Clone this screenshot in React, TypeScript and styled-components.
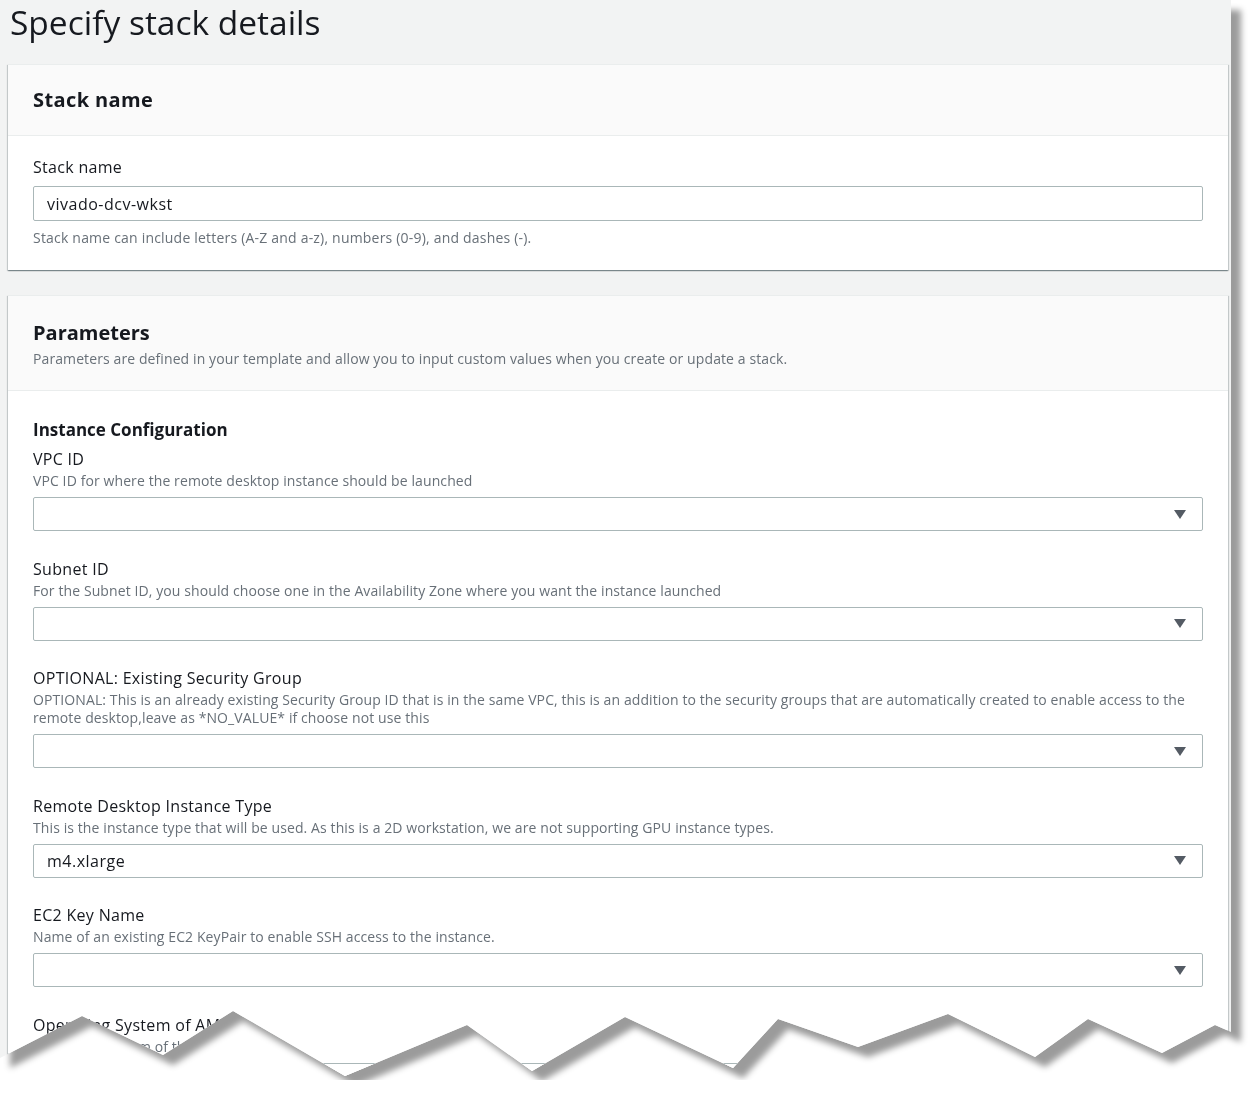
import styled, { createGlobalStyle } from "styled-components";

const GlobalStyle = createGlobalStyle`
  html, body {
    margin: 0;
    padding: 0;
    background: #ffffff;
  }
  body {
    font-family: "Open Sans", "Noto Sans", Arial, sans-serif;
    color: #16191f;
  }
  * { box-sizing: border-box; }
`;

const tornEdge = `polygon(
  0 0, 1231px 0, 1231px 1032px, 1215px 1025px, 1162px 1053px, 1088px 1019px,
  1035px 1057px, 948px 1014px, 858px 1047px, 778px 1019px, 733px 1068px,
  625px 1017px, 532px 1071px, 467px 1025px, 345px 1076px, 233px 1011px,
  163px 1055px, 82px 1016px, 0 1058px
)`;

const ShadowFrame = styled.div`
  width: 1231px;
  filter: drop-shadow(10px 10px 3px #9b9b9b);
`;

const Page = styled.div`
  height: 1080px;
  overflow: hidden;
  background: #f2f3f3;
  clip-path: ${tornEdge};
  padding: 0 3px 0 8px;
`;

const Title = styled.h1`
  margin: 0;
  padding: 1px 0 0 2px;
  height: 64px;
  font-size: 33.5px;
  line-height: 42px;
  font-weight: 400;
  color: #16191f;
`;

const Panel = styled.section`
  background: #ffffff;
  box-shadow: 0 1px 1px 0 rgba(0, 28, 36, 0.3), 1px 1px 1px 0 rgba(0, 28, 36, 0.15),
    -1px 1px 1px 0 rgba(0, 28, 36, 0.15);
  border-top: 1px solid #eaeded;
  & + & {
    margin-top: 25px;
  }
`;

const PanelHeader = styled.header<{ $tall?: boolean }>`
  background: #fafafa;
  border-bottom: 1px solid #eaeded;
  padding: ${(p) => (p.$tall ? "21px 25px 22px" : "19px 25px 19px")};
`;

const PanelTitle = styled.h2<{ $spacing?: number }>`
  margin: 0;
  font-size: 20px;
  line-height: 32px;
  font-weight: 700;
  letter-spacing: ${(p) => p.$spacing ?? 0}px;
`;

const HeaderText = styled.p`
  margin: 1px 0 0;
  font-size: 14px;
  line-height: 18px;
  letter-spacing: 0.1px;
  color: #687078;
`;

const PanelBody = styled.div<{ $top: number }>`
  padding: ${(p) => p.$top}px 25px 23px;
`;

const GroupTitle = styled.h3`
  margin: 0 0 7px;
  font-size: 17px;
  line-height: 22px;
  font-weight: 700;
`;

const Field = styled.div`
  & + & {
    margin-top: 26.5px;
  }
`;

const Label = styled.div`
  font-size: 16px;
  line-height: 22px;
  letter-spacing: 0.3px;
  color: #16191f;
`;

const Description = styled.div`
  margin-top: 2px;
  font-size: 14px;
  line-height: 18px;
  letter-spacing: 0.1px;
  color: #687078;
`;

const Hint = styled.div`
  margin-top: 8px;
  font-size: 14px;
  line-height: 18px;
  letter-spacing: 0.2px;
  color: #687078;
`;

const TextInput = styled.input`
  display: block;
  width: 100%;
  height: 35px;
  margin-top: 8px;
  padding: 0 13px;
  border: 1px solid #aab7b8;
  border-radius: 2px;
  background: #ffffff;
  font-family: inherit;
  font-size: 16px;
  letter-spacing: 0.5px;
  color: #16191f;
  outline: none;
`;

const SelectBox = styled.div`
  display: flex;
  align-items: center;
  justify-content: space-between;
  height: 34px;
  margin-top: 7px;
  padding: 0 16px 0 13px;
  border: 1px solid #aab7b8;
  border-radius: 2px;
  background: #ffffff;
  font-size: 16px;
  letter-spacing: 0.5px;
  color: #16191f;
`;

const Caret = () => (
  <svg width="12" height="9" viewBox="0 0 12 9" aria-hidden="true">
    <path d="M0 0 H12 L6 9 Z" fill="#545b64" />
  </svg>
);

interface IParam {
  label: string;
  description: string;
  value?: string;
}

const params: IParam[] = [
  {
    label: "VPC ID",
    description: "VPC ID for where the remote desktop instance should be launched",
  },
  {
    label: "Subnet ID",
    description:
      "For the Subnet ID, you should choose one in the Availability Zone where you want the instance launched",
  },
  {
    label: "OPTIONAL: Existing Security Group",
    description:
      "OPTIONAL: This is an already existing Security Group ID that is in the same VPC, this is an addition to the security groups that are automatically created to enable access to the remote desktop,leave as *NO_VALUE* if choose not use this",
  },
  {
    label: "Remote Desktop Instance Type",
    description:
      "This is the instance type that will be used. As this is a 2D workstation, we are not supporting GPU instance types.",
    value: "m4.xlarge",
  },
  {
    label: "EC2 Key Name",
    description: "Name of an existing EC2 KeyPair to enable SSH access to the instance.",
  },
  {
    label: "Operating System of AMI",
    description: "Operating System of the AMI",
  },
];

function App() {
  return (
    <>
      <GlobalStyle />
      <ShadowFrame>
        <Page>
          <Title>Specify stack details</Title>

          <Panel>
            <PanelHeader>
              <PanelTitle $spacing={0.4}>Stack name</PanelTitle>
            </PanelHeader>
            <PanelBody $top={20}>
              <Label>Stack name</Label>
              <TextInput defaultValue="vivado-dcv-wkst" />
              <Hint>Stack name can include letters (A-Z and a-z), numbers (0-9), and dashes (-).</Hint>
            </PanelBody>
          </Panel>

          <Panel>
            <PanelHeader $tall>
              <PanelTitle>Parameters</PanelTitle>
              <HeaderText>
                Parameters are defined in your template and allow you to input custom values when you
                create or update a stack.
              </HeaderText>
            </PanelHeader>
            <PanelBody $top={28}>
              <GroupTitle>Instance Configuration</GroupTitle>
              {params.map((p) => (
                <Field key={p.label}>
                  <Label>{p.label}</Label>
                  <Description>{p.description}</Description>
                  <SelectBox>
                    <span>{p.value}</span>
                    <Caret />
                  </SelectBox>
                </Field>
              ))}
            </PanelBody>
          </Panel>
        </Page>
      </ShadowFrame>
    </>
  );
}

export default App;
